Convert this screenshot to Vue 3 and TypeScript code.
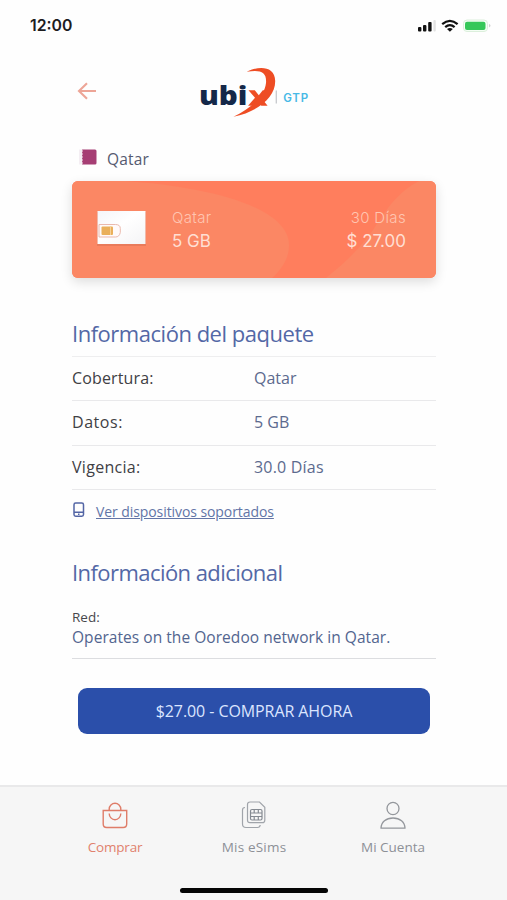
<script setup lang="ts">
interface Detail {
  label: string
  value: string
  key: string
}

const details: Detail[] = [
  { label: 'Cobertura:', value: 'Qatar', key: 'coverage' },
  { label: 'Datos:', value: '5 GB', key: 'data' },
  { label: 'Vigencia:', value: '30.0 Días', key: 'validity' },
]
</script>

<template>
  <div class="screen">
    <header class="status">
      <span class="clock">12:00</span>
      <svg class="indicators" width="76" height="18" viewBox="0 0 76 18">
        <g fill="#111">
          <rect x="1" y="10" width="3.4" height="4.5" rx="1" />
          <rect x="6" y="8" width="3.4" height="6.5" rx="1" />
          <rect x="11.2" y="5" width="3.4" height="9.5" rx="1" />
        </g>
        <rect x="16.4" y="3" width="2.4" height="11.5" rx="1" fill="#e2e2e2" />
        <g fill="none" stroke="#111" stroke-width="2.3">
          <path d="M25.2 7.2 Q32.9 .6 40.6 7.2" />
          <path d="M28.2 10.1 Q32.9 6.2 37.6 10.1" />
        </g>
        <path d="M30 12 Q32.9 9.8 35.8 12 L32.9 14.8Z" fill="#111" />
        <rect x="46.5" y="3" width="24" height="11.5" rx="3.5" fill="#f4fff5" stroke="#dcefdc" />
        <rect x="48" y="4.7" width="20.5" height="8.3" rx="2" fill="#35c759" />
        <path d="M72.3 7 Q74.5 8.7 72.3 10.5Z" fill="#bbb" />
      </svg>
    </header>

    <div class="brandbar">
      <svg class="back" width="20" height="20" viewBox="0 0 20 20" fill="none" stroke="#eda597" stroke-width="2.1">
        <path d="M19 10H2M10 2.2 2 10l8 7.8" />
      </svg>
      <svg class="logo" width="116" height="56" viewBox="0 0 116 56">
        <text x="1" y="43.2" class="word" textLength="48.5" lengthAdjust="spacingAndGlyphs">ubi</text>
        <path d="M50.5 28.3h6.300l4 4.900 4-4.900h5.200l-6.600 7.800 6.200 7.600h-6.300l-3.600-4.500-3.900 4.500h-5.800l7-7.900z" fill="#ee4d24" />
        <path d="M48.700 9.800C60 4 77 3.400 77.200 19 77.300 35.500 60 49.500 35.500 54.800 52 46.500 66.500 35 68 21 69 9.500 62 7.500 48.700 9.800Z" fill="#ee4d24" />
        <path d="M78.300 28.500v13" stroke="#c7c9cd" stroke-width="1.300" />
        <text x="85.200" y="39.800" class="partner" textLength="25">GTP</text>
      </svg>
    </div>

    <main class="content">
      <div class="country">
        <svg width="20" height="16" viewBox="0 0 20 16">
          <rect width="6" height="15" y=".5" fill="#f4eef3" />
          <path d="M3 .5h13q1.500 0 1.500 1.500v12q0 1.500-1.500 1.500H3l.8-1.500L3 12.500l.8-1.500L3 9.500 3.800 8 3 6.500 3.800 5 3 3.500 3.800 2z" fill="#a63e74" />
        </svg>
        <span>Qatar</span>
      </div>

      <section class="card">
        <svg class="waves" viewBox="0 0 364 98" preserveAspectRatio="none">
          <path d="M0 0h54C125 5 217 23 217 65 217 78 210 89 200 98H0z" fill="#fb8764" />
          <path d="M364 0v98H254C281 76 292 62 302 48 316 25 329 9 347 0z" fill="#fb8764" />
        </svg>
        <svg class="sim" width="53" height="42" viewBox="0 0 53 42">
          <defs>
            <linearGradient id="paper" x2="1" y2="1">
              <stop stop-color="#f5f5f9" />
              <stop offset=".45" stop-color="#fff" />
              <stop offset="1" stop-color="#f4f4f6" />
            </linearGradient>
          </defs>
          <rect x="1" y="5" width="49" height="34" fill="#a64c35" opacity=".2" />
          <rect x="1.500" y="4" width="48" height="33" fill="url(#paper)" />
          <path d="M3 17.500h16.500q4.800 0 4.800 4v4q-1 4.500-4.800 4.500H3z" fill="#fffafa" stroke="#eab9ad" />
          <rect x="5.500" y="19.500" width="11.500" height="8.500" rx="1" fill="#eab05b" />
          <path d="M14.500 19.500v8.500" stroke="#f6d197" />
        </svg>
        <div class="plan">
          <span>Qatar</span>
          <strong>5 GB</strong>
        </div>
        <div class="price">
          <span>30 Días</span>
          <strong>$ 27.00</strong>
        </div>
      </section>

      <h2 class="package">Información del paquete</h2>
      <dl>
        <div v-for="detail in details" :key="detail.key" class="row">
          <dt :class="detail.key">{{ detail.label }}</dt>
          <dd :class="detail.key">{{ detail.value }}</dd>
        </div>
      </dl>
      <a class="devices">
        <svg width="12" height="16" viewBox="0 0 12 16" fill="none" stroke="#5365a5" stroke-width="1.500">
          <rect x="1" y="1" width="9.500" height="13.200" rx="1.700" />
          <path d="M1 10.200h9.500M5 12.300h1.500" />
        </svg>
        <span>Ver dispositivos soportados</span>
      </a>

      <h2 class="additional">Información adicional</h2>
      <section class="network">
        <span>Red:</span>
        <p>Operates on the Ooredoo network in Qatar.</p>
      </section>
      <button><span>$27.00 - COMPRAR AHORA</span></button>
    </main>

    <footer>
      <nav>
        <a class="buy">
          <svg width="28" height="30" viewBox="0 0 28 30" fill="none" stroke="#df7d69" stroke-width="1.400">
            <path d="M2.200 9.500h23.500V23q0 3.500-3.500 3.500H5.700Q2.200 26.500 2.200 23z" />
            <path d="M8.200 9.500V8a5.800 5.800 0 0 1 11.600 0v1.500M8.200 12.500a5.800 6.200 0 0 0 11.600 0" />
          </svg>
          <span>Comprar</span>
        </a>
        <a class="esims">
          <svg width="28" height="30" viewBox="0 0 28 30" fill="none" stroke="#a0a4aa" stroke-width="1.200">
            <path d="M5 6.500Q2.500 6.500 2.500 9v14q0 3.500 3.500 3.500h11.500q2.500 0 2.700-2.500" />
            <path d="M10 1h9.500l5.300 5.300v12.900q0 2.500-2.500 2.500H10q-2.500 0-2.500-2.500V3.500Q7.500 1 10 1z" />
            <rect x="10.500" y="8.500" width="11.500" height="10.500" rx="1.500" stroke="#858a92" />
            <path d="M10.500 12h11.500M10.500 15.500h11.500M14.200 8.500V12M18.300 8.500V12M14.200 15.500V19M18.300 15.500V19" stroke="#858a92" />
          </svg>
          <span>Mis eSims</span>
        </a>
        <a class="account">
          <svg width="28" height="30" viewBox="0 0 28 30" fill="none" stroke="#94979c" stroke-width="1.300">
            <ellipse cx="14" cy="7.500" rx="6" ry="6.200" />
            <path d="M2 27.200C2.200 21 7 17 14 17s11.800 4 12 10.200z" stroke-linejoin="round" />
          </svg>
          <span>Mi Cuenta</span>
        </a>
      </nav>
      <div class="home"></div>
    </footer>
  </div>
</template>

<style>
body { background: #fefefe; }
</style>

<style scoped>
.screen {
  width: 507px;
  height: 900px;
  display: flex;
  flex-direction: column;
  overflow: hidden;
  background: #fefefe;
  color: #4e5c86;
  font-family: "Open Sans", "Noto Sans", sans-serif;
  box-sizing: border-box;
}
svg { display: block; flex: none; }
.status {
  height: 50px;
  flex: none;
  display: flex;
  justify-content: space-between;
  align-items: flex-start;
  padding: 15px 14px 0 30px;
  box-sizing: border-box;
}
.clock {
  font: 600 15.800px/22px Inter, sans-serif;
  color: #1d1d1f;
}
.indicators { margin-top: 2px; }
.brandbar {
  height: 96px;
  flex: none;
  display: flex;
  align-items: flex-start;
  padding: 12px 0 0 77px;
  box-sizing: border-box;
}
.back { margin-top: 19px; }
.logo { margin-left: 101px; }
.word { font: 800 27px "Open Sans", sans-serif; fill: #142849; }
.partner { font: 600 11.500px Inter, sans-serif; fill: #47b9e6; }
.content { width: 364px; margin-left: 72px; flex: none; }
.country { height: 35px; display: flex; padding: 3px 0 0 4px; box-sizing: border-box; }
.country svg { margin-left: 3px; }
.country span { margin-left: 8px; font-size: 15.500px; line-height: 22px; letter-spacing: .15px; margin-top: -1px; color: #555a70; }
.card {
  position: relative;
  display: flex;
  height: 97px;
  padding: 26px 30px 0 24px;
  box-sizing: border-box;
  border-radius: 6px;
  background: #ff7e5d;
  box-shadow: 0 4px 12px #0002;
}
.waves { position: absolute; inset: 0; width: 100%; height: 100%; border-radius: 6px; }
.sim, .plan, .price { position: relative; }
.plan, .price { display: flex; flex-direction: column; font-family: Inter, "Open Sans", sans-serif; font-weight: 300; white-space: nowrap; color: #ffdfd3; }
.plan { margin-left: 23px; }
.price { margin-left: auto; text-align: right; }
.plan span, .price span { height: 22px; font-size: 15px; line-height: 22px; letter-spacing: .35px; color: #ffc5b1; }
.plan strong, .price strong { font-size: 17px; line-height: 24px; font-weight: 400; }
h2 { margin: 0; font-size: 22px; line-height: 30px; font-weight: 400; color: #5368a6; white-space: nowrap; letter-spacing: -.48px; }
.package { margin-top: 40px; }
dl { margin: 8px 0 0; border-top: 1px solid #eeeeef; }
.row { display: grid; grid-template-columns: 182px 1fr; height: 44.300px; border-bottom: 1px solid #e9e9eb; box-sizing: border-box; }
dt, dd { margin: 0; font-size: 16px; line-height: 43.300px; white-space: nowrap; }
dt { color: #3f4044; letter-spacing: .15px; }
dt.data { letter-spacing: .55px; }
dt.validity { letter-spacing: .3px; }
dd { color: #5c6a8e; }
dd.validity { letter-spacing: .2px; }
.devices { display: flex; height: 30px; padding: 11px 0 0 1px; align-items: flex-start; color: #6275a7; }
.devices span { font-size: 14px; line-height: 21px; letter-spacing: -.08px; margin-left: 11px; text-decoration: underline; white-space: nowrap; }
.devices svg { margin-top: 1px; }
.additional { margin-top: 26px; letter-spacing: -.56px; }
.network { height: 50px; margin-top: 21px; border-bottom: 1px solid #dcdde0; white-space: nowrap; }
.network span { display: block; font-size: 13.500px; line-height: 19px; color: #47484c; }
.network p { margin: 0; font-size: 15.500px; letter-spacing: .05px; line-height: 21px; color: #52658f; }
button { display: flex; width: 352px; height: 46px; margin: 29px 0 0 6px; padding: 0; align-items: center; justify-content: center; border: 0; border-radius: 9px; background: #2b4faa; color: #dbe5ff; font: 400 16px/22px "Open Sans", sans-serif; letter-spacing: -.08px; white-space: nowrap; box-sizing: border-box; }
footer { margin-top: auto; height: 115px; flex: none; border-top: 2px solid #e9e9ea; box-sizing: border-box; background: #f6f6f6; }
nav { display: flex; gap: 39px; padding: 14px 0 0 65px; }
nav a { display: flex; width: 100px; height: 60px; flex-direction: column; align-items: center; font-size: 13.500px; letter-spacing: 0; color: #8d9096; white-space: nowrap; }
nav span { margin-top: 7px; line-height: 18px; }
nav .esims { letter-spacing: .2px; }
nav .buy { color: #e1816d; letter-spacing: -.2px; }
.home { width: 148px; height: 5px; margin: 27px 0 0 180px; border-radius: 3px; background: #050505; }
</style>
